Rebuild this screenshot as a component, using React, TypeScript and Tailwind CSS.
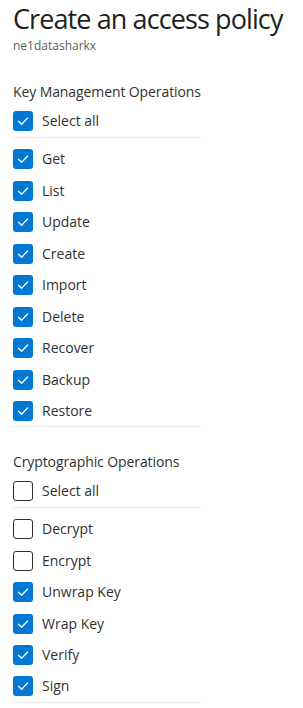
import React from "react";

const Check = ({ checked }: { checked: boolean }) =>
  checked ? (
    <div className="w-5 h-5 rounded-[3px] bg-[#0078d4] flex items-center justify-center shrink-0">
      <svg width="14" height="14" viewBox="0 0 14 14" fill="none">
        <path d="M2.5 7.2 L5.6 10.2 L11.6 4" stroke="white" strokeWidth="1.3" strokeLinecap="round" strokeLinejoin="round" />
      </svg>
    </div>
  ) : (
    <div className="w-5 h-5 rounded-[3px] border border-[#323130] bg-white shrink-0" />
  );

const Row = ({ label, checked, divider }: { label: string; checked: boolean; divider?: boolean }) => (
  <div className={`h-[31.5px] flex items-center gap-[9px] ${divider ? "border-b border-[#edebe9]" : ""}`}>
    <Check checked={checked} />
    <span className="text-[14px] text-[#323130] leading-5">{label}</span>
  </div>
);

const Section = ({ title, all, items }: { title: string; all: boolean; items: [string, boolean][] }) => (
  <div className="w-[188px]">
    <div className="text-[14px] leading-5 text-[#323130] mb-[4px] whitespace-nowrap tracking-[-0.1px]">{title}</div>
    <Row label="Select all" checked={all} divider />
    <div className="mt-[6px]">
      {items.map(([l, c], i) => (
        <Row key={l} label={l} checked={c} divider={i === items.length - 1} />
      ))}
    </div>
  </div>
);

export default function App() {
  return (
    <div className="bg-white w-[303px] h-[708px] pl-[13px] font-['Open_Sans',sans-serif]">
      <div className="text-[27px] leading-[37px] text-[#201f1e] whitespace-nowrap tracking-[-0.9px] w-max">Create an access policy</div>
      <div className="text-[12px] leading-4 text-[#605e5c] mt-[1px]">ne1datasharkx</div>
      <div className="mt-[28px]">
        <Section
          title="Key Management Operations"
          all={true}
          items={[
            ["Get", true],
            ["List", true],
            ["Update", true],
            ["Create", true],
            ["Import", true],
            ["Delete", true],
            ["Recover", true],
            ["Backup", true],
            ["Restore", true],
          ]}
        />
      </div>
      <div className="mt-[25px]">
        <Section
          title="Cryptographic Operations"
          all={false}
          items={[
            ["Decrypt", false],
            ["Encrypt", false],
            ["Unwrap Key", true],
            ["Wrap Key", true],
            ["Verify", true],
            ["Sign", true],
          ]}
        />
      </div>
    </div>
  );
}
